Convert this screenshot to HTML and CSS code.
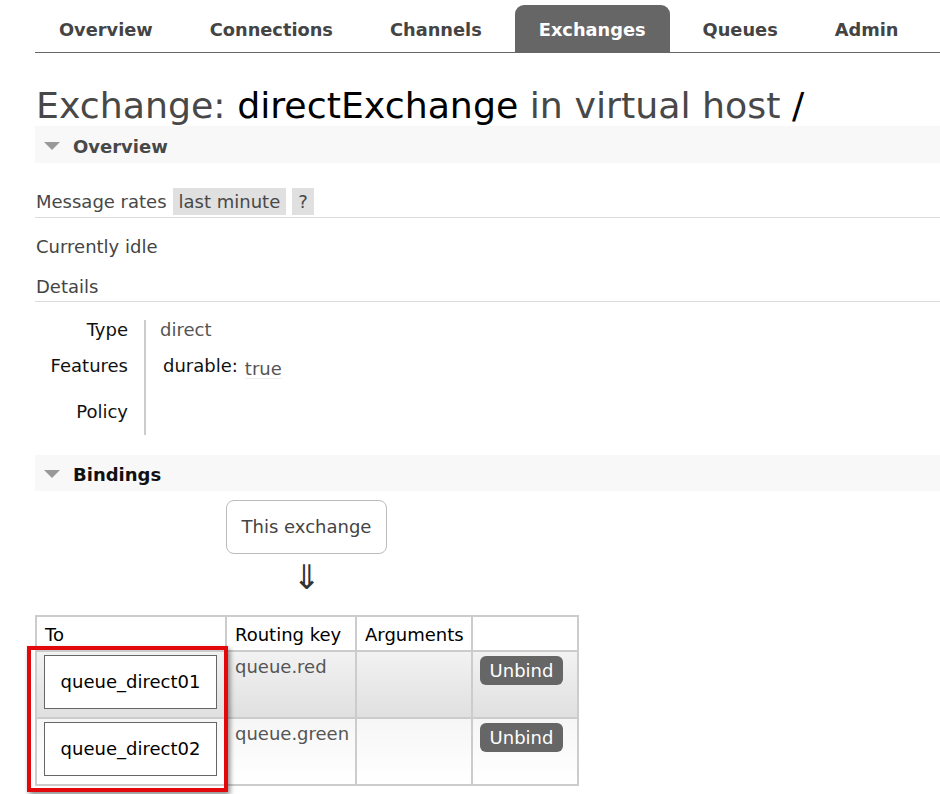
FILE: index.html
```html
<!DOCTYPE html>
<html>
<head>
<meta charset="utf-8">
<link rel="stylesheet" href="styles.css">
</head>
<body>
<div class="page">
  <ul class="tabs">
    <li class="tab">Overview</li>
    <li class="tab">Connections</li>
    <li class="tab">Channels</li>
    <li class="tab active">Exchanges</li>
    <li class="tab">Queues</li>
    <li class="tab">Admin</li>
  </ul>

  <h1 class="title">Exchange: <b>directExchange</b> in virtual host <b>/</b></h1>

  <h2 class="section-head overview-head"><span class="tri"></span>Overview</h2>

  <div class="rates-row">
    <span class="rates-label">Message rates</span>
    <span class="chip">last minute</span>
    <span class="chip">?</span>
  </div>

  <p class="idle">Currently idle</p>
  <p class="details-head">Details</p>

  <div class="facts">
    <div class="fact-label r1">Type</div>
    <div class="fact-value r1 muted">direct</div>
    <div class="fact-label r2">Features</div>
    <div class="fact-value r2"><span class="feat-key">durable:</span><span class="feat-val">true</span></div>
    <div class="fact-label r3">Policy</div>
    <div class="fact-value r3"></div>
  </div>

  <h2 class="section-head bindings-head"><span class="tri"></span>Bindings</h2>

  <div class="source-box">This exchange</div>
  <div class="arrow">⇓</div>

  <div class="table-wrap">
    <table class="bindings">
      <thead>
        <tr>
          <th class="c-to">To</th>
          <th class="c-key">Routing key</th>
          <th class="c-args">Arguments</th>
          <th class="c-act"></th>
        </tr>
      </thead>
      <tbody>
        <tr class="alt1">
          <td class="c-q"><div class="queue-box">queue_direct01</div></td>
          <td class="key">queue.red</td>
          <td></td>
          <td class="c-b"><span class="btn">Unbind</span></td>
        </tr>
        <tr class="alt2">
          <td class="c-q"><div class="queue-box">queue_direct02</div></td>
          <td class="key">queue.green</td>
          <td></td>
          <td class="c-b"><span class="btn">Unbind</span></td>
        </tr>
      </tbody>
    </table>
    <div class="highlight"></div>
  </div>
</div>
</body>
</html>
```

FILE: styles.css
```css
html {
  overflow: hidden;
}

body {
  margin: 0;
  padding: 0;
  background: #fff;
  font-family: "DejaVu Sans", Verdana, sans-serif;
  font-size: 18px;
  color: #484848;
}

.page {
  padding-left: 35px;
  padding-bottom: 20px;
}

/* tabs */
.tabs {
  list-style: none;
  margin: 0;
  padding: 5px 0 0 0;
  display: flex;
  border-bottom: 1px solid #666;
}

.tab {
  height: 44px;
  line-height: 44px;
  padding: 3px 24px 0 24px;
  margin-right: 9px;
  font-weight: bold;
  font-size: 17.8px;
  color: #444;
  border-radius: 9px 9px 0 0;
}

.tab.active {
  background: #666;
  color: #fff;
}

/* title */
.title {
  margin: 33px 0 0 1px;
  font-size: 36.3px;
  line-height: 40px;
  font-weight: normal;
  color: #484848;
  white-space: nowrap;
}

.title b {
  font-weight: normal;
  color: #000;
}

/* section headers */
.section-head {
  margin: 0;
  height: 37px;
  background: #f8f8f8;
  font-size: 18px;
  font-weight: bold;
  display: flex;
  align-items: center;
  box-sizing: border-box;
}

.overview-head {
  color: #484848;
  padding-top: 3px;
}

.bindings-head {
  color: #111;
  margin-top: 20px;
  height: 36px;
  padding-top: 2px;
}

.tri {
  width: 0;
  height: 0;
  border-left: 8px solid transparent;
  border-right: 8px solid transparent;
  border-top: 8px solid #999;
  margin: 0 13px 0 9px;
}

/* message rates */
.rates-row {
  margin-top: 25px;
  display: flex;
  align-items: center;
  gap: 6px;
  padding-bottom: 2px;
  border-bottom: 1px solid #ddd;
}

.rates-label {
  padding-left: 1px;
  color: #484848;
}

.chip {
  background: #e0e0e0;
  height: 27px;
  line-height: 27px;
  padding: 0 6px;
  color: #484848;
}

.idle {
  margin: 19px 0 0 1px;
  line-height: 20px;
  color: #444;
}

.details-head {
  margin: 20px 0 0 0;
  padding: 0 0 4px 1px;
  line-height: 20px;
  border-bottom: 1px solid #ddd;
  color: #444;
}

/* facts */
.facts {
  margin-top: 18px;
  display: grid;
  grid-template-columns: 93px 16px auto;
  grid-template-rows: 24px 46px 45px;
  width: 300px;
}

.fact-label {
  grid-column: 1;
  text-align: right;
  color: #111;
  line-height: 20px;
}

.fact-value {
  grid-column: 3;
  border-left: 2px solid #ccc;
  padding-left: 14px;
  line-height: 20px;
}

.r1 { grid-row: 1; }
.r2 { grid-row: 2; padding-top: 12px; }
.r3 { grid-row: 3; padding-top: 12px; }

.muted { color: #555; }

.feat-key {
  color: #111;
  padding-left: 3px;
}

.feat-val {
  display: inline-block;
  margin-left: 7px;
  color: #555;
  vertical-align: -3px;
  border-bottom: 1px solid #eee;
  line-height: 19px;
}

/* source box */
.source-box {
  margin: 9px 0 0 191px;
  width: 159px;
  height: 52px;
  line-height: 52px;
  border: 1px solid #bbb;
  border-radius: 8px;
  text-align: center;
  color: #444;
}

.arrow {
  margin: 6px 0 0 191px;
  width: 161px;
  text-align: center;
  font-size: 34px;
  line-height: 34px;
  height: 34px;
  color: #333;
}

/* table */
.table-wrap {
  position: relative;
  margin-top: 21px;
  width: 544px;
}

.bindings {
  border-collapse: collapse;
  border: 2px solid #ccc;
  width: 544px;
  table-layout: fixed;
}

.bindings th,
.bindings td {
  border: 2px solid #ccc;
  padding: 0;
  text-align: left;
  font-weight: normal;
  box-sizing: border-box;
}

.bindings th {
  height: 35px;
  padding: 2px 0 0 8px;
  color: #000;
  vertical-align: middle;
  background: #fff;
  line-height: 20px;
}

.c-to { width: 190px; }
.c-key { width: 130px; }
.c-args { width: 116px; }

.bindings td {
  height: 67px;
  vertical-align: top;
}

.alt1 td {
  background: linear-gradient(#f2f2f2, #e0e0e0);
}

.alt2 td {
  background: linear-gradient(#f6f6f6, #ffffff);
}

.bindings td.c-q {
  padding: 3px 0 0 7px;
}

.queue-box {
  width: 171px;
  height: 52px;
  line-height: 52px;
  border: 1px solid #666;
  background: #fff;
  text-align: center;
  color: #000;
}

.bindings td.key {
  padding: 5px 0 0 8px;
  line-height: 20px;
  color: #555;
}

.bindings td.c-b {
  padding: 4px 0 0 7px;
}

.btn {
  display: inline-block;
  width: 83px;
  height: 29px;
  line-height: 29px;
  text-align: center;
  background: #666;
  color: #fff;
  border-radius: 6px;
}

/* annotation overlay */
.highlight {
  position: absolute;
  left: -8px;
  top: 31px;
  width: 193px;
  height: 138px;
  border: 4px solid #e3080c;
  box-shadow: 2px 3px 5px rgba(0, 0, 0, 0.45);
  pointer-events: none;
}
```
